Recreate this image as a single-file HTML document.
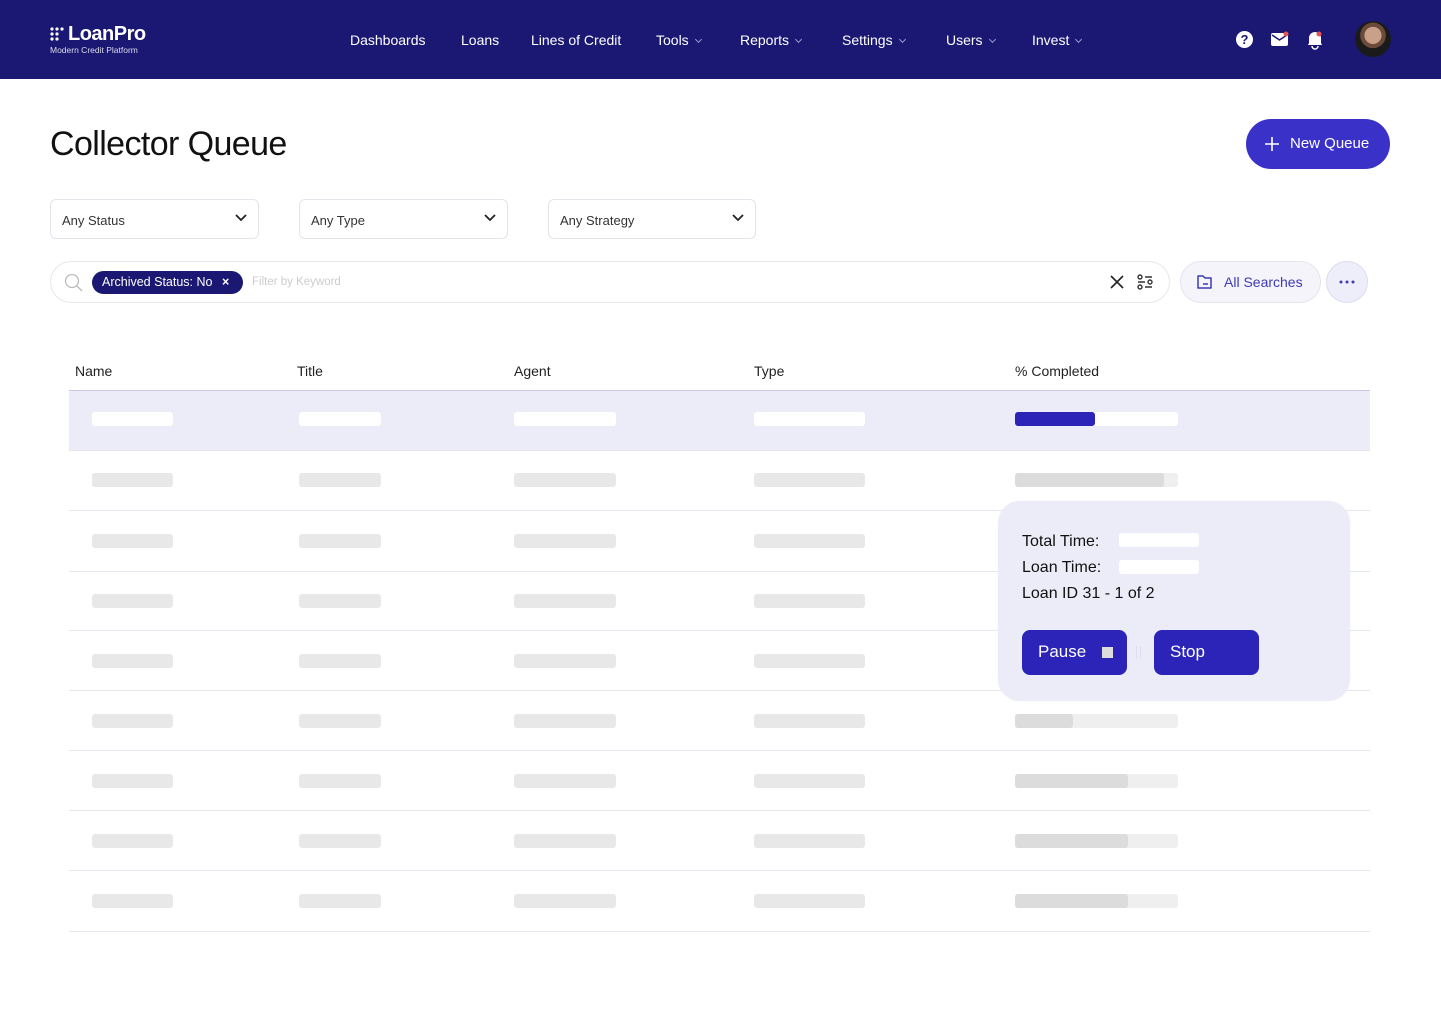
<!DOCTYPE html>
<html><head><meta charset="utf-8"><style>
*{box-sizing:border-box;margin:0;padding:0}
body{width:1441px;height:1024px;background:#fff;font-family:"Liberation Sans",sans-serif;position:relative;overflow:hidden;color:#111}
.nav{position:absolute;left:0;top:0;width:1441px;height:79px;background:#1a1873}
.nav .it{position:absolute;top:32px;color:#fff;font-size:14px}
.chev{display:inline-block;width:5px;height:5px;border-right:1px solid #9a9ac8;border-bottom:1px solid #9a9ac8;transform:rotate(45deg);margin-left:7px;position:relative;top:-3px}
.abs{position:absolute}
.sel{position:absolute;top:199px;height:40px;border:1px solid #e4e4ea;border-radius:6px;font-size:13px;color:#333;padding:13px 11px}
.sel svg{position:absolute;right:11px;top:14px}
.bar{position:absolute;height:14px;border-radius:3px;background:#e8e8e8}
.line{position:absolute;left:69px;width:1301px;height:1px;background:#e6e6ee}
.th{position:absolute;top:363px;font-size:14px;color:#222}
.btn{position:absolute;top:630px;width:105px;height:45px;background:#2c23b8;border-radius:8px;color:#fff;font-size:17px;padding:12px 16px}
</style></head><body>
<div class="nav">
  <div class="abs" style="left:50px;top:27px;width:16px;height:14px">
    <svg width="16" height="14"><g fill="#fff"><circle cx="2" cy="2" r="1.6"/><circle cx="7" cy="2" r="1.6"/><circle cx="12" cy="2" r="1.6"/><circle cx="2" cy="7" r="1.6"/><circle cx="7" cy="7" r="1.6"/><circle cx="2" cy="12" r="1.6"/><circle cx="7" cy="12" r="1.6"/></g></svg>
  </div>
  <div class="abs" style="left:68px;top:23px;color:#fff;font-size:20px;font-weight:bold;letter-spacing:-0.5px">LoanPro</div>
  <div class="abs" style="left:50px;top:45px;color:#dde;font-size:8.5px">Modern Credit Platform</div>
  <div class="it" style="left:350px">Dashboards</div>
  <div class="it" style="left:461px">Loans</div>
  <div class="it" style="left:531px">Lines of Credit</div>
  <div class="it" style="left:656px">Tools<span class="chev"></span></div>
  <div class="it" style="left:740px">Reports<span class="chev"></span></div>
  <div class="it" style="left:842px">Settings<span class="chev"></span></div>
  <div class="it" style="left:946px">Users<span class="chev"></span></div>
  <div class="it" style="left:1032px">Invest<span class="chev"></span></div>
  <div class="abs" style="left:1236px;top:31px;width:17px;height:17px;border-radius:50%;background:#fff;color:#1a1873;font-size:13px;font-weight:bold;text-align:center;line-height:17px">?</div>
  <svg class="abs" style="left:1271px;top:31px" width="18" height="16"><rect x="0" y="2" width="17" height="13" rx="2" fill="#fff"/><path d="M1 4l7.5 5L16 4" stroke="#1a1873" stroke-width="1.5" fill="none"/><circle cx="15" cy="3" r="2.5" fill="#e25555"/></svg>
  <svg class="abs" style="left:1306px;top:30px" width="18" height="20"><path d="M3 13V8a6 6 0 0 1 12 0v5l1 2H2z" fill="#fff"/><path d="M6 16a3 3 0 0 0 6 0" stroke="#fff" stroke-width="1.5" fill="none"/><circle cx="13" cy="4" r="2.5" fill="#e25555"/></svg>
  <div class="abs" style="left:1355px;top:21px;width:36px;height:36px;border-radius:50%;background:radial-gradient(circle at 50% 40%,#c9a088 0 30%,#6b4a3a 31% 45%,#1a1a1a 46%);"></div>
</div>
<div class="abs" style="left:50px;top:125px;font-size:34px;color:#111;letter-spacing:-0.6px">Collector Queue</div>
<div class="abs" style="left:1246px;top:119px;width:144px;height:50px;border-radius:25px;background:#3a32c8;color:#fff;font-size:15px;padding:16px 0 0 44px">New Queue</div>
<svg class="abs" style="left:1264px;top:136px" width="16" height="16"><path d="M8 1v14M1 8h14" stroke="#fff" stroke-width="1.6"/></svg>
<div class="sel" style="left:50px;width:209px">Any Status<svg width="12" height="8"><path d="M1 1l5 5 5-5" stroke="#222" stroke-width="1.8" fill="none"/></svg></div>
<div class="sel" style="left:299px;width:209px">Any Type<svg width="12" height="8"><path d="M1 1l5 5 5-5" stroke="#222" stroke-width="1.8" fill="none"/></svg></div>
<div class="sel" style="left:548px;width:208px">Any Strategy<svg width="12" height="8"><path d="M1 1l5 5 5-5" stroke="#222" stroke-width="1.8" fill="none"/></svg></div>
<div class="abs" style="left:50px;top:261px;width:1120px;height:42px;border:1px solid #e6e6ec;border-radius:21px"></div>
<svg class="abs" style="left:64px;top:273px" width="19" height="19"><circle cx="8" cy="8" r="6.5" stroke="#bbb" stroke-width="1.3" fill="none"/><path d="M13 13l5 5" stroke="#bbb" stroke-width="1.3"/></svg>
<div class="abs" style="left:92px;top:271px;width:151px;height:23px;border-radius:12px;background:#1a1873;color:#fff;font-size:12.5px;padding:4px 0 0 10px">Archived Status: No <b style="margin-left:6px">×</b></div>
<div class="abs" style="left:252px;top:276px;font-size:11.5px;color:#ccc">Filter by Keyword</div>
<svg class="abs" style="left:1110px;top:275px" width="14" height="14"><path d="M1 1l12 12M13 1L1 13" stroke="#222" stroke-width="1.6"/></svg>
<svg class="abs" style="left:1137px;top:274px" width="16" height="16"><g stroke="#333" stroke-width="1.4" fill="none"><path d="M8 3h7M1 8h7M8 13h7"/><circle cx="3" cy="3" r="2"/><circle cx="13" cy="8" r="2"/><circle cx="3" cy="13" r="2"/></g></svg>
<div class="abs" style="left:1180px;top:261px;width:141px;height:42px;border:1px solid #e4e4ee;border-radius:21px;background:#f4f4fa;color:#3d3bb5;font-size:14px;padding:12px 0 0 43px">All Searches</div>
<svg class="abs" style="left:1196px;top:274px" width="18" height="16"><path d="M2 2h5l2 2h6v10H2z" stroke="#3d3bb5" stroke-width="1.5" fill="none" stroke-linejoin="round"/><path d="M7 10h5" stroke="#3d3bb5" stroke-width="1.5"/></svg>
<div class="abs" style="left:1326px;top:261px;width:42px;height:42px;border:1px solid #dcdcf0;border-radius:50%;background:#eeeefa"></div>
<svg class="abs" style="left:1338px;top:280px" width="18" height="4"><g fill="#3d3bb5"><circle cx="3" cy="2" r="1.5"/><circle cx="9" cy="2" r="1.5"/><circle cx="15" cy="2" r="1.5"/></g></svg>
<div class="th" style="left:75px">Name</div>
<div class="th" style="left:297px">Title</div>
<div class="th" style="left:514px">Agent</div>
<div class="th" style="left:754px">Type</div>
<div class="th" style="left:1015px">% Completed</div>
<div class="abs" style="left:69px;top:390px;width:1301px;height:1px;background:#c8c8e0"></div>
<div class="abs" style="left:69px;top:391px;width:1301px;height:59px;background:#ececf8"></div>
<div id="rows"></div>
<script>
var ys=[419,480,541,601,661,721,781,841,901],ls=[450,510,571,630,690,750,810,870,931],f=[80,149,0,0,0,58,113,113,113];
var h='';
ys.forEach(function(y,i){var c=i==0?'#fff':'#e8e8e8';var t=y-7;
h+='<div class="bar" style="left:92px;top:'+t+'px;width:81px;background:'+c+'"></div>';
h+='<div class="bar" style="left:299px;top:'+t+'px;width:82px;background:'+c+'"></div>';
h+='<div class="bar" style="left:514px;top:'+t+'px;width:102px;background:'+c+'"></div>';
h+='<div class="bar" style="left:754px;top:'+t+'px;width:111px;background:'+c+'"></div>';
h+='<div class="bar" style="left:1015px;top:'+t+'px;width:163px;background:'+(i==0?'#fff':'#efefef')+'"></div>';
if(f[i])h+='<div class="bar" style="left:1015px;top:'+t+'px;width:'+f[i]+'px;background:'+(i==0?'#2c23b8':'#dcdcdc')+'"></div>';
h+='<div class="line" style="top:'+ls[i]+'px"></div>';});
document.getElementById('rows').innerHTML=h;
</script>
<div class="abs" style="left:998px;top:501px;width:352px;height:200px;border-radius:22px;background:#ececf8;box-shadow:0 0 2px rgba(0,0,0,0.04)"></div>
<div class="abs" style="left:1022px;top:529px;font-size:16px;line-height:26px;color:#111">Total Time:<br>Loan Time:<br>Loan ID 31 - 1 of 2</div>
<div class="abs" style="left:1119px;top:533px;width:80px;height:14px;background:#fff;border-radius:3px"></div>
<div class="abs" style="left:1119px;top:560px;width:80px;height:14px;background:#fff;border-radius:3px"></div>
<div class="btn" style="left:1022px">Pause</div>
<div class="abs" style="left:1102px;top:647px;width:11px;height:11px;background:#ddd"></div>
<div class="abs" style="left:1136px;top:646px;width:5px;height:13px;border-left:1px solid #dde;border-right:1px solid #dde"></div>
<div class="btn" style="left:1154px">Stop</div>
</body></html>
